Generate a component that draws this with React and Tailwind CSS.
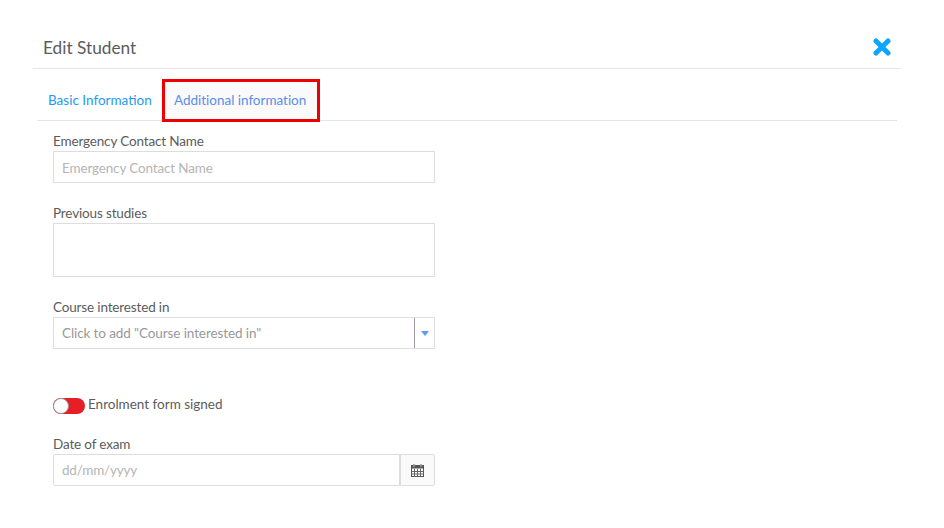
function Label({ children }) {
  return <label className="block h-[20px] leading-[20px] text-[13.5px] tracking-[-0.15px] text-[#5c5c5c]">{children}</label>;
}
export default function App() {
  return (
    <div className="w-[944px] h-[528px] bg-white px-[33px] font-['Lato','Open_Sans',sans-serif] overflow-hidden">
      <div className="w-[868px] h-[69px] pt-[34px] border-b border-[#e5e5e5] flex items-start justify-between pl-[10px] pr-[10px]">
        <h1 className="text-[17.25px] leading-[28px] text-[#5c5c5c] h-[28px]">Edit Student</h1>
        <svg className="mt-[4px]" width="18" height="18" viewBox="0 0 18 18"><path d="M3 3 L15 15 M15 3 L3 15" stroke="#0ea5ff" strokeWidth="5" strokeLinecap="round" /></svg>
      </div>
      <div className="mx-[4px] w-[860px] h-[52px] border-b border-[#e5e5e5] flex items-start pt-[10px]">
        <div className="h-[43px] pl-[11px] pb-[1px] flex items-center text-[13.5px] text-[#1e9bf0] w-[125px] whitespace-nowrap">Basic Information</div>
        <div className="h-[43px] w-[158px] border-[3px] border-[#ee0000] bg-[#fafafa] pb-[1px] flex items-center pl-[9px] text-[13.5px] tracking-[-0.02px] text-[#5b8def] whitespace-nowrap relative z-10">Additional information</div>
      </div>
      <div className="pl-[20px] pt-[10px] w-[402px]">
        <Label>Emergency Contact Name</Label>
        <input readOnly placeholder="Emergency Contact Name" className="block w-[382px] h-[32px] border border-[#dddddd] pl-[8px] pt-[2px] text-[13.5px] tracking-[-0.15px] placeholder:text-[#b5b5b5] outline-none" />
        <div className="h-[20px]" />
        <Label>Previous studies</Label>
        <textarea readOnly className="block w-[382px] h-[54px] border border-[#dddddd] outline-none resize-none" />
        <div className="h-[20px]" />
        <Label>Course interested in</Label>
        <div className="w-[382px] h-[32px] border border-[#dddddd] flex items-stretch">
          <div className="flex-1 flex items-center pl-[8px] text-[13.5px] tracking-[-0.1px] text-[#999999] whitespace-nowrap">Click to add "Course interested in"</div>
          <div className="w-[20px] border-l border-[#a79aa8] flex items-center justify-center">
            <svg width="8" height="5" viewBox="0 0 8 5"><path d="M0 0H8L4 5Z" fill="#5b9cf0" /></svg>
          </div>
        </div>
        <div className="h-[49px]" />
        <div className="h-[16px] flex items-center">
          <div className="relative w-[32px] h-[16px] rounded-full bg-[#e61e25]">
            <div className="absolute left-0 top-0 w-[16px] h-[16px] rounded-full bg-white border border-[#999999]" />
          </div>
          <span className="ml-[3px] pb-[3px] text-[13.5px] text-[#5c5c5c] whitespace-nowrap">Enrolment form signed</span>
        </div>
        <div className="h-[20px]" />
        <Label>Date of exam</Label>
        <div className="w-[382px] h-[32px] flex items-stretch">
          <div className="flex-1 border border-[#dddddd] rounded-l-[2px] flex items-center pl-[8px] text-[13.5px] tracking-[-0.2px] text-[#b5b5b5]">dd/mm/yyyy</div>
          <div className="w-[35px] border border-[#dddddd] rounded-r-[2px] bg-[#fafafa] flex items-center justify-center">
            <svg width="13" height="14" viewBox="0 0 13 14">
              <rect x="0.5" y="2.5" width="12" height="11" fill="#fff" stroke="#555" />
              <rect x="0.5" y="2.5" width="12" height="3" fill="#555" />
              <path d="M3 1v3M10 1v3" stroke="#999" strokeWidth="1.6" />
              <path d="M0 8.5h13M0 11h13M3.5 6v8M6.5 6v8M9.5 6v8" stroke="#666" />
            </svg>
          </div>
        </div>
      </div>
    </div>
  );
}
